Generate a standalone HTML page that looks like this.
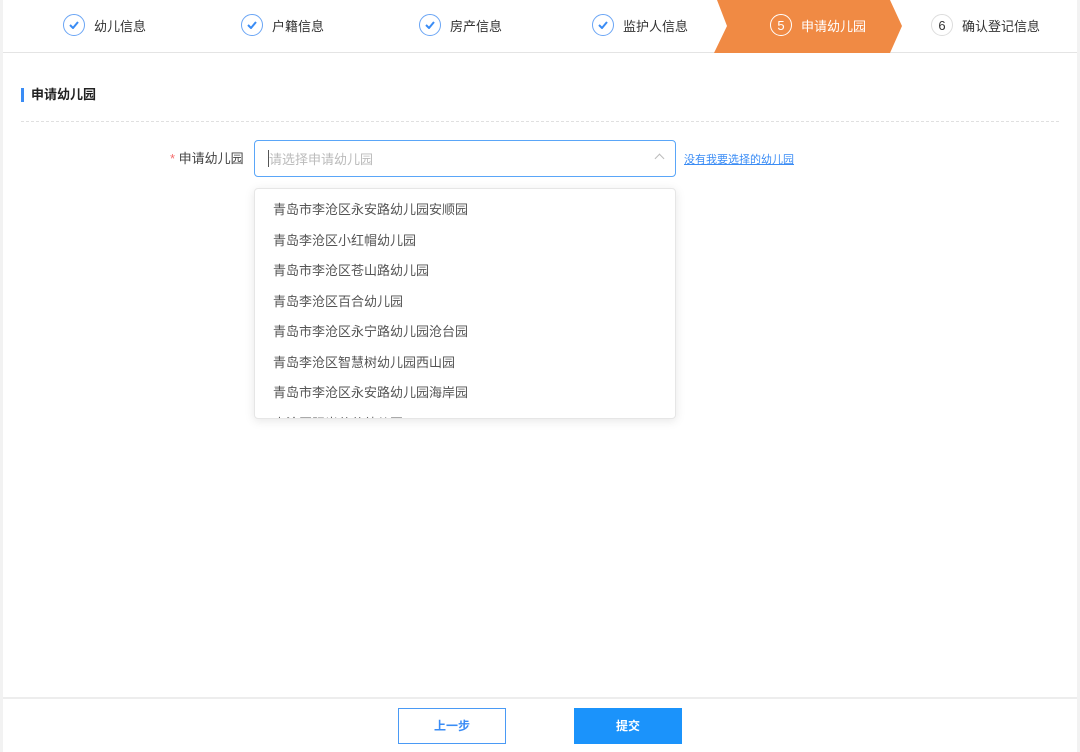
<!DOCTYPE html>
<html><head><meta charset="utf-8"><style>
*{margin:0;padding:0;box-sizing:border-box}
body{width:1080px;height:752px;background:#f2f2f2;font-family:"Liberation Sans","Noto Sans CJK SC",sans-serif;position:relative;overflow:hidden}
.page{position:absolute;left:3px;top:0;width:1074px;height:752px;background:#fff}
.steps{position:absolute;left:0;top:0;width:1074px;height:53px;border-bottom:1px solid #e4e4e4}
.st{position:absolute;top:13px;height:24px;display:flex;align-items:center;font-size:13px;color:#333}
.c{width:22px;height:22px;border-radius:50%;border:1px solid #6aa5f5;display:flex;align-items:center;justify-content:center;margin-right:9px;color:#333;font-size:13px}
.chev{position:absolute;left:711px;top:0}
.sec{position:absolute;left:18px;top:88px;height:14px;border-left:3px solid #3a8cf5;padding-left:7px;font-size:13px;font-weight:bold;color:#222;line-height:14px}
.dash{position:absolute;left:18px;top:121px;width:1038px;border-top:1px dashed #e0e0e0}
.lbl{position:absolute;left:167px;top:148px;font-size:13px;color:#444}
.lbl b{color:#f56c6c;font-weight:normal}
.inp{position:absolute;left:251px;top:140px;width:422px;height:37px;border:1px solid #5aa6f8;border-radius:4px;font-size:13px;color:#bbb;padding:8px 0 0 14px}
.inp:before{content:"";position:absolute;left:13px;top:9px;height:17px;border-left:1px solid #555}
.arr{position:absolute;right:12px;top:14px;width:7px;height:7px;border-left:1px solid #bbb;border-top:1px solid #bbb;transform:rotate(45deg)}
.link{position:absolute;left:681px;top:151px;font-size:11px;color:#3a8cf5;text-decoration:underline}
.dd{position:absolute;left:251px;top:188px;width:422px;height:231px;border:1px solid #e6e6e6;border-radius:4px;box-shadow:0 2px 10px rgba(0,0,0,.1);overflow:hidden;background:#fff}
.dd div{height:30.5px;line-height:30.5px;padding-left:18px;font-size:13px;color:#555}
.dd .f{margin-top:6px}
.foot{position:absolute;left:0;top:697px;width:1074px;height:55px;border-top:2px solid #ededed}
.b1{position:absolute;left:395px;top:9px;width:108px;height:36px;border:1px solid #4a9af5;color:#3a8cf5;font-size:12px;font-weight:bold;text-align:center;line-height:34px}
.b2{position:absolute;left:571px;top:9px;width:108px;height:36px;background:#1b93fb;color:#fff;font-size:12px;font-weight:bold;text-align:center;line-height:36px}
</style></head><body><div class="page">
<div class="steps">
<svg class="chev" width="190" height="53"><polygon points="3,0 176,0 188,26 176,53 0,53 13,26" fill="#f08a44"/></svg>
<div class="st" style="left:60px"><span class="c"><svg width="10" height="8"><path d="M1 4 L4 7 L9 1" stroke="#3a8cf5" stroke-width="2" fill="none"/></svg></span>幼儿信息</div>
<div class="st" style="left:238px"><span class="c"><svg width="10" height="8"><path d="M1 4 L4 7 L9 1" stroke="#3a8cf5" stroke-width="2" fill="none"/></svg></span>户籍信息</div>
<div class="st" style="left:416px"><span class="c"><svg width="10" height="8"><path d="M1 4 L4 7 L9 1" stroke="#3a8cf5" stroke-width="2" fill="none"/></svg></span>房产信息</div>
<div class="st" style="left:589px"><span class="c"><svg width="10" height="8"><path d="M1 4 L4 7 L9 1" stroke="#3a8cf5" stroke-width="2" fill="none"/></svg></span>监护人信息</div>
<div class="st" style="left:767px;color:#fff"><span class="c" style="border-color:#fff;color:#fff">5</span>申请幼儿园</div>
<div class="st" style="left:928px"><span class="c" style="border-color:#ddd">6</span>确认登记信息</div>
</div>
<div class="sec">申请幼儿园</div>
<div class="dash"></div>
<div class="lbl"><b>*</b> 申请幼儿园</div>
<div class="inp">请选择申请幼儿园<span class="arr"></span></div>
<div class="link">没有我要选择的幼儿园</div>
<div class="dd">
<div class="f">青岛市李沧区永安路幼儿园安顺园</div>
<div>青岛李沧区小红帽幼儿园</div>
<div>青岛市李沧区苍山路幼儿园</div>
<div>青岛李沧区百合幼儿园</div>
<div>青岛市李沧区永宁路幼儿园沧台园</div>
<div>青岛李沧区智慧树幼儿园西山园</div>
<div>青岛市李沧区永安路幼儿园海岸园</div>
<div>李沧区阳光苗苗幼儿园</div>
</div>
<div class="foot"><div class="b1">上一步</div><div class="b2">提交</div></div>
</div></body></html>
